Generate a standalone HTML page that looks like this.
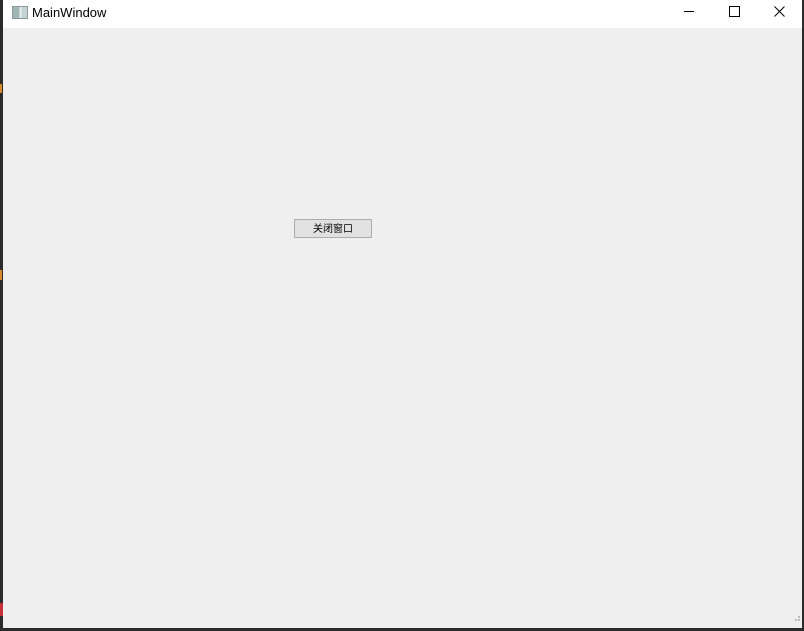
<!DOCTYPE html>
<html><head><meta charset="utf-8"><style>
html,body{margin:0;padding:0;width:804px;height:631px;overflow:hidden;background:#2b2b2b;position:relative;font-family:"Segoe UI","Liberation Sans","Noto Sans CJK SC",sans-serif}
.win{position:absolute;left:3px;top:0;width:799px;height:628px;background:#efefef}
.title{position:absolute;left:0;top:0;width:799px;height:28px;background:#fff}
.icon{position:absolute;left:9px;top:6px;width:14px;height:11px;border:1px solid #8a9aa0;background:linear-gradient(90deg,#9fb7b5 0 45%,#e8eeee 45% 60%,#c5d3d3 60%)}
.tt{position:absolute;left:29px;top:5px;font-size:13px;color:#000}
.btn{position:absolute;left:291px;top:219px;width:76px;height:17px;border:1px solid #adadad;background:#e1e1e1;font-size:10px;line-height:19px;text-align:center;color:#000;font-family:"Liberation Sans","Noto Sans CJK SC",sans-serif}
.min{position:absolute;left:681px;top:11px;width:10px;height:1px;background:#000}
.max{position:absolute;left:726px;top:6px;width:9px;height:9px;border:1px solid #000}
</style></head><body>
<div style="position:absolute;left:0;top:84px;width:2px;height:9px;background:#d98a2a"></div>
<div style="position:absolute;left:0;top:270px;width:2px;height:10px;background:#d98a2a"></div>
<div style="position:absolute;left:0;top:603px;width:3px;height:13px;background:#c8313a"></div>
<div class="win">
<div class="title"><div class="icon"></div><div class="tt">MainWindow</div>
<div class="min"></div><div class="max"></div>
<svg style="position:absolute;left:771px;top:6px" width="11" height="11"><path d="M0.5 0.5L10.5 10.5M10.5 0.5L0.5 10.5" stroke="#000" stroke-width="1"/></svg>
</div>
<div class="btn">关闭窗口</div>
<div style="position:absolute;left:795px;top:619px;width:2px;height:2px;background:#bbb;box-shadow:-3px 0 #bbb,0 -3px #bbb"></div>
</div>
</body></html>
